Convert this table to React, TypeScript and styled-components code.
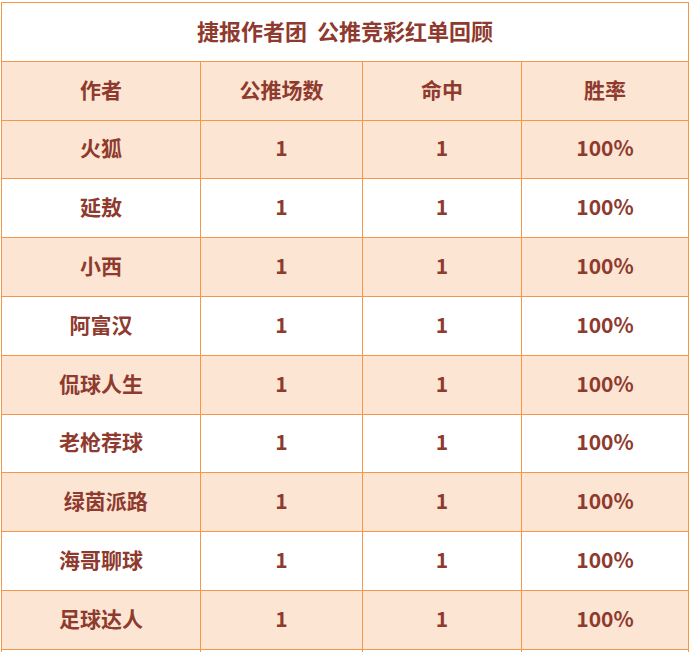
import React from 'react';
import styled, { createGlobalStyle } from 'styled-components';

const GlobalStyle = createGlobalStyle`
    body {
        margin: 0;
        background: #ffffff;
    }
`;

const Page = styled.div`
    padding: 2px 0 0 1px;
`;

const Table = styled.table`
    border-collapse: collapse;
    table-layout: fixed;
    width: 688px;
    font-family: "Noto Sans CJK SC", "Liberation Sans", sans-serif;
    font-weight: bold;
    font-size: 21px;
    color: #8e3a2e;
`;

const Row = styled.tr`
    height: 58.8px;
`;

const Cell = styled.td<{ $shaded?: boolean }>`
    border: 1px solid #f4974a;
    background: ${(p) => (p.$shaded ? '#fde5d3' : '#ffffff')};
    text-align: center;
    vertical-align: middle;
    padding: 0 0 4px;
    white-space: pre;
`;

const TitleCell = styled(Cell)`
    font-size: 22px;
`;

const columns = [199, 162, 159, 167];

const authors = [
    '火狐',
    '延敖',
    '小西',
    '阿富汉',
    '侃球人生',
    '老枪荐球',
    '\u00a0\u00a0绿茵派路',
    '海哥聊球',
    '足球达人',
];

const App = () => {
    return (
        <>
            <GlobalStyle />
            <Page>
                <Table>
                    <colgroup>
                        {columns.map((w, i) => (
                            <col key={i} style={{ width: w }} />
                        ))}
                    </colgroup>
                    <tbody>
                        <Row>
                            <TitleCell colSpan={4}>捷报作者团{'\u00a0\u00a0'}公推竞彩红单回顾</TitleCell>
                        </Row>
                        <Row>
                            <Cell $shaded>作者</Cell>
                            <Cell $shaded>公推场数</Cell>
                            <Cell $shaded>命中</Cell>
                            <Cell $shaded>胜率</Cell>
                        </Row>
                        {authors.map((name, i) => (
                            <Row key={name}>
                                <Cell $shaded={i % 2 === 0}>{name}</Cell>
                                <Cell $shaded={i % 2 === 0}>1</Cell>
                                <Cell $shaded={i % 2 === 0}>1</Cell>
                                <Cell $shaded={i % 2 === 0}>100%</Cell>
                            </Row>
                        ))}
                        <Row>
                            <Cell />
                            <Cell />
                            <Cell />
                            <Cell />
                        </Row>
                    </tbody>
                </Table>
            </Page>
        </>
    );
};

export default App;
